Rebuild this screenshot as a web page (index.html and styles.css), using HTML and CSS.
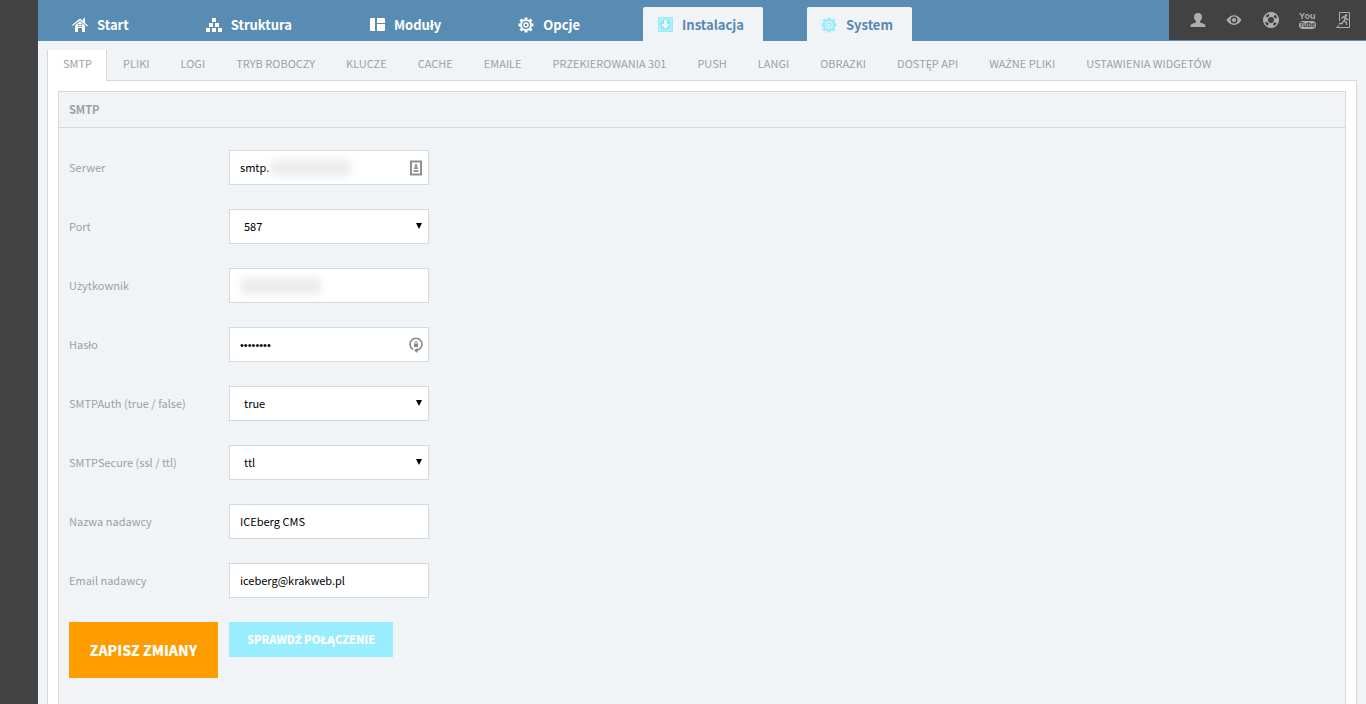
FILE: index.html
```html
<!DOCTYPE html>
<html lang="pl">
<head>
<meta charset="utf-8">
<title>ICEberg CMS – SMTP</title>
<link rel="stylesheet" href="styles.css">
</head>
<body>
<div class="app">
  <aside class="rail"></aside>
  <div class="main">
    <header class="topbar">
      <nav class="nav">
        <a class="nav-item" href="#start"><svg class="icon" viewBox="0 0 16 16"><path fill="currentColor" d="M0 8 8 1.500l3 2.500V2l2-1.500V6l3 2.500-.5 1L8 3.500.5 9z"/><path fill="currentColor" fill-rule="evenodd" d="m8 4.500 5 4V15h-3v-4H6v4H3V8.500zM6 7v1h1.500V7zm2.500 0v1H10V7zM6 9v1h1.500V9zm2.500 0v1H10V9z"/></svg>Start</a>
        <a class="nav-item" href="#struktura"><svg class="icon" viewBox="0 0 16 16"><path fill="currentColor" d="M6 1h4v4H6zM3 6h4v4H3zM9 6h4v4H9zM0 11h4v4H0zM6 11h4v4H6zM12 11h4v4h-4z"/></svg>Struktura</a>
        <a class="nav-item" href="#moduly"><svg class="icon" viewBox="0 0 16 16"><path fill="currentColor" d="M2 1h4v13H2q-1 0-1-1V2q0-1 1-1zM8 1h7q1 0 1 1v4H8zM8 7h8v6q0 1-1 1H8z"/></svg>Moduły</a>
        <a class="nav-item" href="#opcje"><svg class="icon" viewBox="0 0 16 16"><g fill="none" stroke="currentColor"><circle cx="8" cy="8" r="5" stroke-width="2"/><circle cx="8" cy="8" r="2" stroke-width="1.500"/><path stroke-width="3" d="M8 .5v2M8 13.500v2M.5 8h2M13.500 8h2M2.500 2.500 4 4M12 12l1.500 1.500M2.500 13.500 4 12M12 4l1.500-1.500"/></g></svg>Opcje</a>
        <a class="nav-item active" href="#instalacja"><svg class="icon" viewBox="0 0 16 16"><rect x="1.500" y=".5" width="14" height="14" fill="#b4f0fa" stroke="#9aebf8"/><circle cx="8.500" cy="7.500" r="5.500" fill="#8ee8f8"/><path fill="#f0f4f7" d="M7 3h3v4h3l-4.500 5L4 7h3z"/></svg>Instalacja</a>
        <a class="nav-item active" href="#system"><svg class="icon" viewBox="0 0 16 16"><g fill="none" stroke="#98ebf8"><circle cx="8" cy="8" r="5" stroke-width="2.500"/><circle cx="8" cy="8" r="2" stroke-width="1.500"/><path stroke-width="3" d="M8 .5v2M8 13.500v2M.5 8h2M13.500 8h2M2.500 2.500 4 4M12 12l1.500 1.500M2.500 13.500 4 12M12 4l1.500-1.500"/></g></svg>System</a>
      </nav>
      <div class="tools">
        <a href="#user" aria-label="Profil"><svg class="tool-icon" viewBox="0 0 16 16"><path fill="currentColor" d="M8 1c2.500 0 4 1.500 4 4 0 2-1 3.500-2 4v1.500l4.500 1.500q1 .5 1 3H.5q0-2.500 1-3L6 10.500V9C5 8.500 4 7 4 5c0-2.500 1.500-4 4-4z"/></svg></a>
        <a href="#view" aria-label="Podgląd"><svg class="tool-icon" viewBox="0 0 16 16"><path fill="currentColor" fill-rule="evenodd" d="M.5 8C4.500 1.500 11.500 1.500 15.500 8 11.500 14.500 4.500 14.500.5 8zM8 4.500a3.500 3.500 0 1 0 0 7 3.500 3.500 0 0 0 0-7z"/><circle cx="8" cy="8" r="2" fill="currentColor"/></svg></a>
        <a href="#help" aria-label="Pomoc"><svg class="tool-icon" viewBox="0 0 16 16"><g fill="none" stroke="currentColor"><circle cx="8" cy="8" r="7.300" stroke-width="1.400"/><circle cx="8" cy="8" r="3.700" stroke-width="1.400"/><circle cx="8" cy="8" r="5.500" stroke-width="4" stroke-dasharray="5.600 3.040" stroke-dashoffset="2.800"/></g></svg></a>
        <a class="youtube" href="#youtube" aria-label="YouTube"><span>You</span><span class="tube">Tube</span></a>
        <a href="#logout" aria-label="Wyloguj"><svg class="tool-icon" viewBox="0 0 16 16"><g fill="none" stroke="currentColor"><path d="M3.500 9V.5h10v15h-13l3-2.500"/><path stroke-width="1.300" d="M5.500 6.500 7 5h2.500L8 9l2.500 1.500V13M9.500 5.500 10.500 7.500H12.500M7.500 9 6 11.500H3"/></g><circle cx="10" cy="3.500" r="1.300" fill="currentColor"/></svg></a>
      </div>
    </header>
    <nav class="tabs">
      <a class="tab current" href="#smtp">SMTP</a>
      <a class="tab" href="#pliki">PLIKI</a>
      <a class="tab" href="#logi">LOGI</a>
      <a class="tab" href="#tryb">TRYB ROBOCZY</a>
      <a class="tab" href="#klucze">KLUCZE</a>
      <a class="tab" href="#cache">CACHE</a>
      <a class="tab" href="#emaile">EMAILE</a>
      <a class="tab" href="#przekierowania">PRZEKIEROWANIA 301</a>
      <a class="tab" href="#push">PUSH</a>
      <a class="tab" href="#langi">LANGI</a>
      <a class="tab" href="#obrazki">OBRAZKI</a>
      <a class="tab" href="#api">DOSTĘP API</a>
      <a class="tab" href="#wazne">WA<span class="accent">Ż</span>NE PLIKI</a>
      <a class="tab" href="#widgety">USTAWIENIA WIDGETÓW</a>
    </nav>
    <main class="sheet">
      <section class="panel">
        <h1 class="panel-title">SMTP</h1>
        <form class="form">
          <div class="row">
            <label for="server">Serwer</label>
            <div class="field"><input id="server" type="text" value="smtp."><span class="redacted after-text"></span>
              <svg class="field-icon" viewBox="0 0 14 16"><rect x="2" y="1.500" width="10" height="13" fill="none" stroke="#909090" stroke-width="2"/><path fill="#999" d="M6 4h2v2l1.500 3h-5L6 6zM4.500 10h5v2h-5z"/></svg></div>
          </div>
          <div class="row">
            <label for="port">Port</label>
            <div class="field"><select id="port"><option>587</option></select><svg class="arrow" viewBox="0 0 8 8"><path d="M1 1h6L4 7z"/></svg></div>
          </div>
          <div class="row">
            <label for="user">U<span class="accent">ż</span>ytkownik</label>
            <div class="field"><input id="user" type="text"><span class="redacted"></span></div>
          </div>
          <div class="row">
            <label for="pass">Hasło</label>
            <div class="field"><input id="pass" type="password" value="password">
              <svg class="field-icon" viewBox="0 0 14 16"><path fill="none" stroke="#888" stroke-width="1.600" d="M4 12.500A6 6 0 1 1 10 12.500L7.500 13.500"/><path fill="#888" d="M8.500 10.800V16L5 13.500zM5 6.500h4V10H5z"/><path fill="none" stroke="#999" d="M5.800 6.500V5.500q0-1 1.200-1t1.200 1v1"/></svg></div>
          </div>
          <div class="row">
            <label for="auth">SMTPAuth (true / false)</label>
            <div class="field"><select id="auth"><option>true</option></select><svg class="arrow" viewBox="0 0 8 8"><path d="M1 1h6L4 7z"/></svg></div>
          </div>
          <div class="row">
            <label for="secure">SMTPSecure (ssl / ttl)</label>
            <div class="field"><select id="secure"><option>ttl</option></select><svg class="arrow" viewBox="0 0 8 8"><path d="M1 1h6L4 7z"/></svg></div>
          </div>
          <div class="row">
            <label for="name">Nazwa nadawcy</label>
            <div class="field"><input id="name" type="text" value="ICEberg CMS"></div>
          </div>
          <div class="row">
            <label for="email">Email nadawcy</label>
            <div class="field"><input id="email" type="text" value="iceberg@krakweb.pl"></div>
          </div>
          <div class="actions">
            <button class="save" type="button">ZAPISZ ZMIANY</button>
            <button class="check" type="button">SPRAWD<span class="accent">Ź</span> POŁĄCZENIE</button>
          </div>
        </form>
      </section>
    </main>
  </div>
</div>
</body>
</html>
```
FILE: styles.css
```css
* { box-sizing: border-box; }
body {
  margin: 0;
  background: #f0f4f7;
  font-family: "Noto Sans CJK JP", "Noto Sans", sans-serif;
  font-size: 11px;
  line-height: 16px;
  color: #a0a0a0;
}
a { color: inherit; text-decoration: none; }
.accent { font-family: "Open Sans", sans-serif; line-height: 1; }
.app { display: flex; min-height: 100vh; }
.rail { flex: 0 0 38px; background: #424242; }
.main { flex: 1; min-width: 0; display: flex; flex-direction: column; }

.topbar {
  display: flex;
  justify-content: space-between;
  height: 41px;
  background: #588cb3;
}
.nav { display: flex; gap: 44px; align-items: flex-end; padding-left: 20px; }
.nav-item {
  display: flex;
  align-items: center;
  gap: 9px;
  height: 34px;
  padding: 2px 19px 0 14px;
  border-radius: 2px 2px 0 0;
  color: #fff;
  font-size: 13px;
  font-weight: 700;
}
.nav-item.active { background: #f0f4f7; color: #5689b1; }
.icon { width: 16px; height: 16px; }
.tools {
  display: flex;
  align-items: center;
  justify-content: space-between;
  width: 197px;
  height: 40px;
  padding: 0 14px 0 21px;
  background: #424242;
  color: #adadad;
}
.tools a { display: block; }
.tool-icon { display: block; width: 16px; height: 16px; }
.tools .youtube {
  width: 17px;
  font: 700 9px/9px "Liberation Sans Narrow", "Liberation Sans", sans-serif;
  text-align: center;
}
.youtube span { display: block; }
.youtube .tube {
  border-radius: 4px;
  background: #adadad;
  color: #424242;
  font-size: 7px;
  line-height: 8px;
}

.tabs { display: flex; padding: 9px 0 0 9px; position: relative; z-index: 1; }
.tab {
  height: 30px;
  padding: 5px 14px 0 15px;
  border: 1px solid transparent;
  border-width: 0 1px;
  white-space: nowrap;
}
.tab.current { height: 31px; margin-bottom: -1px; background: #fff; border-color: #d5d9dc; }

.sheet {
  flex: 1;
  display: flex;
  margin: 0 9px;
  padding: 10px 10px 0;
  border: 1px solid #d5d9dc;
  border-bottom: 0;
  background: #fff;
}
.panel {
  flex: 1;
  border: 1px solid #d5d9dc;
  border-bottom: 0;
  background: #f0f4f7;
}
.panel-title {
  margin: 0;
  padding: 9px 10px 10px;
  border-bottom: 1px solid #d5d9dc;
  font-size: 11px;
  font-weight: 700;
}
.form { display: flex; flex-direction: column; gap: 24px; padding: 22px 10px 20px; }
.row { display: flex; align-items: center; }
.row label { width: 160px; padding-bottom: 2px; }
.field { position: relative; width: 200px; }
.field input,
.field select {
  display: block;
  width: 100%;
  height: 35px;
  padding: 0 10px 2px;
  border: 1px solid #d5d9dc;
  border-radius: 0;
  background: #fff;
  color: #000;
  font: inherit;
  appearance: none;
}
.field select { padding-left: 14px; }
.field input[type="password"] { padding-bottom: 0; font-family: "Liberation Sans", sans-serif; }
.field-icon { position: absolute; right: 6px; top: 10px; width: 14px; height: 16px; }
.arrow { position: absolute; right: 6px; top: 13px; width: 8px; height: 8px; }
.redacted {
  position: absolute;
  left: 12px;
  top: 10px;
  width: 80px;
  height: 16px;
  background: #ebebeb;
  filter: blur(4px);
}
.redacted.after-text { left: 42px; }

.actions { display: flex; align-items: flex-start; gap: 11px; }
.actions button {
  border: 0;
  color: #fff;
  font-family: inherit;
  font-weight: 900;
  white-space: nowrap;
}
.save { min-width: 149px; height: 56px; padding: 0 20px; background: #ff9c00; font-size: 14px; }
.check { height: 35px; padding: 0 18px 2px; background: #98eefe; font-size: 11px; }
.check .accent { font-weight: 800; }
```
